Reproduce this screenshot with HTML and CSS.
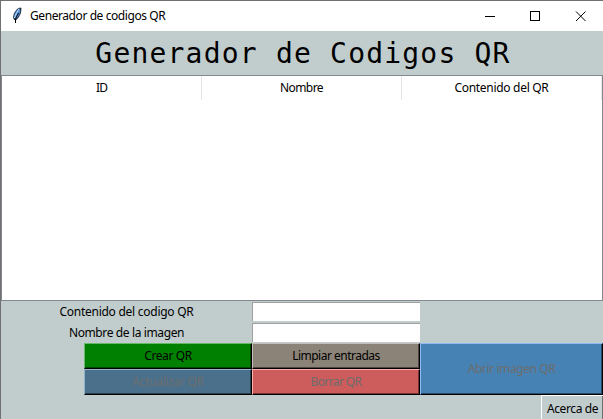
FILE: index.html
```html
<!DOCTYPE html>
<html lang="es">
<head>
<meta charset="utf-8">
<title>Generador de codigos QR</title>
<link rel="stylesheet" href="styles.css">
</head>
<body>
<div class="window">
  <header class="titlebar">
    <svg class="feather" width="10" height="17" viewBox="0 0 10 17">
      <path d="M8 .5 9.500 1 9 6 7 10 4.500 13 2 13 1 10 2 6 5 2Z" fill="#283848"/>
      <path d="M7.500 1.500 8.200 5 6.500 9 4 12 2 11 2.500 7 5 3Z" fill="#5590d8"/>
      <path d="M7 2 4 7 2.500 11" fill="none" stroke="#b8d4f4"/>
      <path d="M6.500 6 3.500 12V16" fill="none" stroke="#000"/>
    </svg>
    <span class="caption">Generador de codigos QR</span>
    <svg class="controls" width="118" height="29" viewBox="0 0 118 29" fill="none" stroke="#000" shape-rendering="crispEdges">
      <path d="M0 14.5H10"/>
      <rect x="45.5" y="9.5" width="9" height="9"/>
      <path d="M91 9.500 100.500 19M100.500 9.500 91 19" shape-rendering="auto"/>
    </svg>
  </header>
  <h1 class="heading"><span>Generador de Codigos QR</span></h1>
  <section class="table">
    <div class="columns">
      <div><span class="t-id">ID</span></div>
      <div><span class="t-name">Nombre</span></div>
      <div><span class="t-content">Contenido del QR</span></div>
    </div>
  </section>
  <form class="form">
    <label class="l-content" for="content"><span>Contenido del codigo QR</span></label>
    <input id="content" type="text">
    <label class="l-name" for="name"><span>Nombre de la imagen</span></label>
    <input id="name" type="text">
  </form>
  <div class="actions">
    <button class="btn create"><span>Crear QR</span></button>
    <button class="btn clear"><span>Limpiar entradas</span></button>
    <button class="btn open" disabled><span>Abrir imagen QR</span></button>
    <button class="btn update" disabled><span>Actualizar QR</span></button>
    <button class="btn delete" disabled><span>Borrar QR</span></button>
  </div>
  <footer class="footer"><button class="about"><span>Acerca de</span></button></footer>
</div>
</body>
</html>
```
FILE: styles.css
```css
* { box-sizing: border-box; }
body {
  margin: 0;
  overflow: hidden;
  font: 12px/16px "Noto Sans", sans-serif;
  color: #000;
}
span { white-space: nowrap; }
.window {
  width: 603px;
  height: 419px;
  overflow: hidden;
  background: #c1cdcd;
  border-top: 1px solid #707070;
  border-left: 1px solid #707070;
}
.titlebar {
  height: 30px;
  display: flex;
  align-items: center;
  background: #fff;
  padding-left: 11px;
}
.feather { margin: 0 8px 1px 0; }
.caption { letter-spacing: -0.42px; }
.controls { margin-left: auto; }
.heading {
  height: 44px;
  margin: 0;
  padding: 2px 0 0 2px;
  display: flex;
  justify-content: center;
  align-items: center;
  font: 28px/42px "DejaVu Sans Mono", monospace;
  letter-spacing: 1.2px;
}
.table {
  height: 226px;
  background: #fff;
  border: 1px solid #828790;
}
.columns {
  display: grid;
  grid-template-columns: repeat(3, 200px);
  height: 24px;
  line-height: 24px;
  text-align: center;
}
.columns div { border-right: 1px solid #e5e5e5; }
.t-id { letter-spacing: -0.8px; }
.t-name { letter-spacing: -0.6px; }
.t-content { letter-spacing: -0.3px; }
.form {
  display: grid;
  grid-template-columns: 251px 168px;
  grid-template-rows: 21px 21px;
  margin: 0;
}
.form label { text-align: center; line-height: 21px; }
.l-content { letter-spacing: -0.26px; }
.l-name { letter-spacing: -0.38px; }
.form input {
  width: 168px;
  height: 19px;
  margin: 1px 0 0;
  padding: 0;
  background: #fff;
  border: 0 solid #a0a0a0;
  border-width: 1px 0 0 1px;
}
.actions {
  display: grid;
  grid-template-columns: 168px 168px 183px;
  grid-template-rows: 26px 26px;
  margin-left: 83px;
}
.btn {
  padding: 0;
  font: inherit;
  letter-spacing: -0.4px;
  color: #000;
  border: 1px solid #000;
  border-top-color: var(--light);
  border-left-color: var(--light);
  box-shadow: inset -1px -1px var(--dark);
  background: var(--face);
}
.btn:disabled { color: #6d6d6d; }
.create { --face: #008000; --light: #67b867; --dark: #004800; }
.clear { --face: #8b8378; --light: #c4bfb8; --dark: #4d4842; letter-spacing: -0.5px; }
.open { --face: #4682b4; --light: #8ebcf2; --dark: #264b6b; grid-area: 1 / 3 / 3 / 4; }
.update { --face: #4a708b; --light: #92b3c9; --dark: #293e4e; letter-spacing: -0.3px; }
.delete { --face: #cd5c5c; --light: #ffb0b0; --dark: #773333; letter-spacing: -0.6px; }
.footer { display: flex; justify-content: flex-end; }
.about {
  width: 62px;
  height: 26px;
  padding: 0;
  font: inherit;
  letter-spacing: -0.4px;
  color: #000;
  background: #c1cdcd;
  border: 0 solid #fff;
  border-width: 1px 0 0 1px;
  box-shadow: inset -1px 0 #697070;
}
```
